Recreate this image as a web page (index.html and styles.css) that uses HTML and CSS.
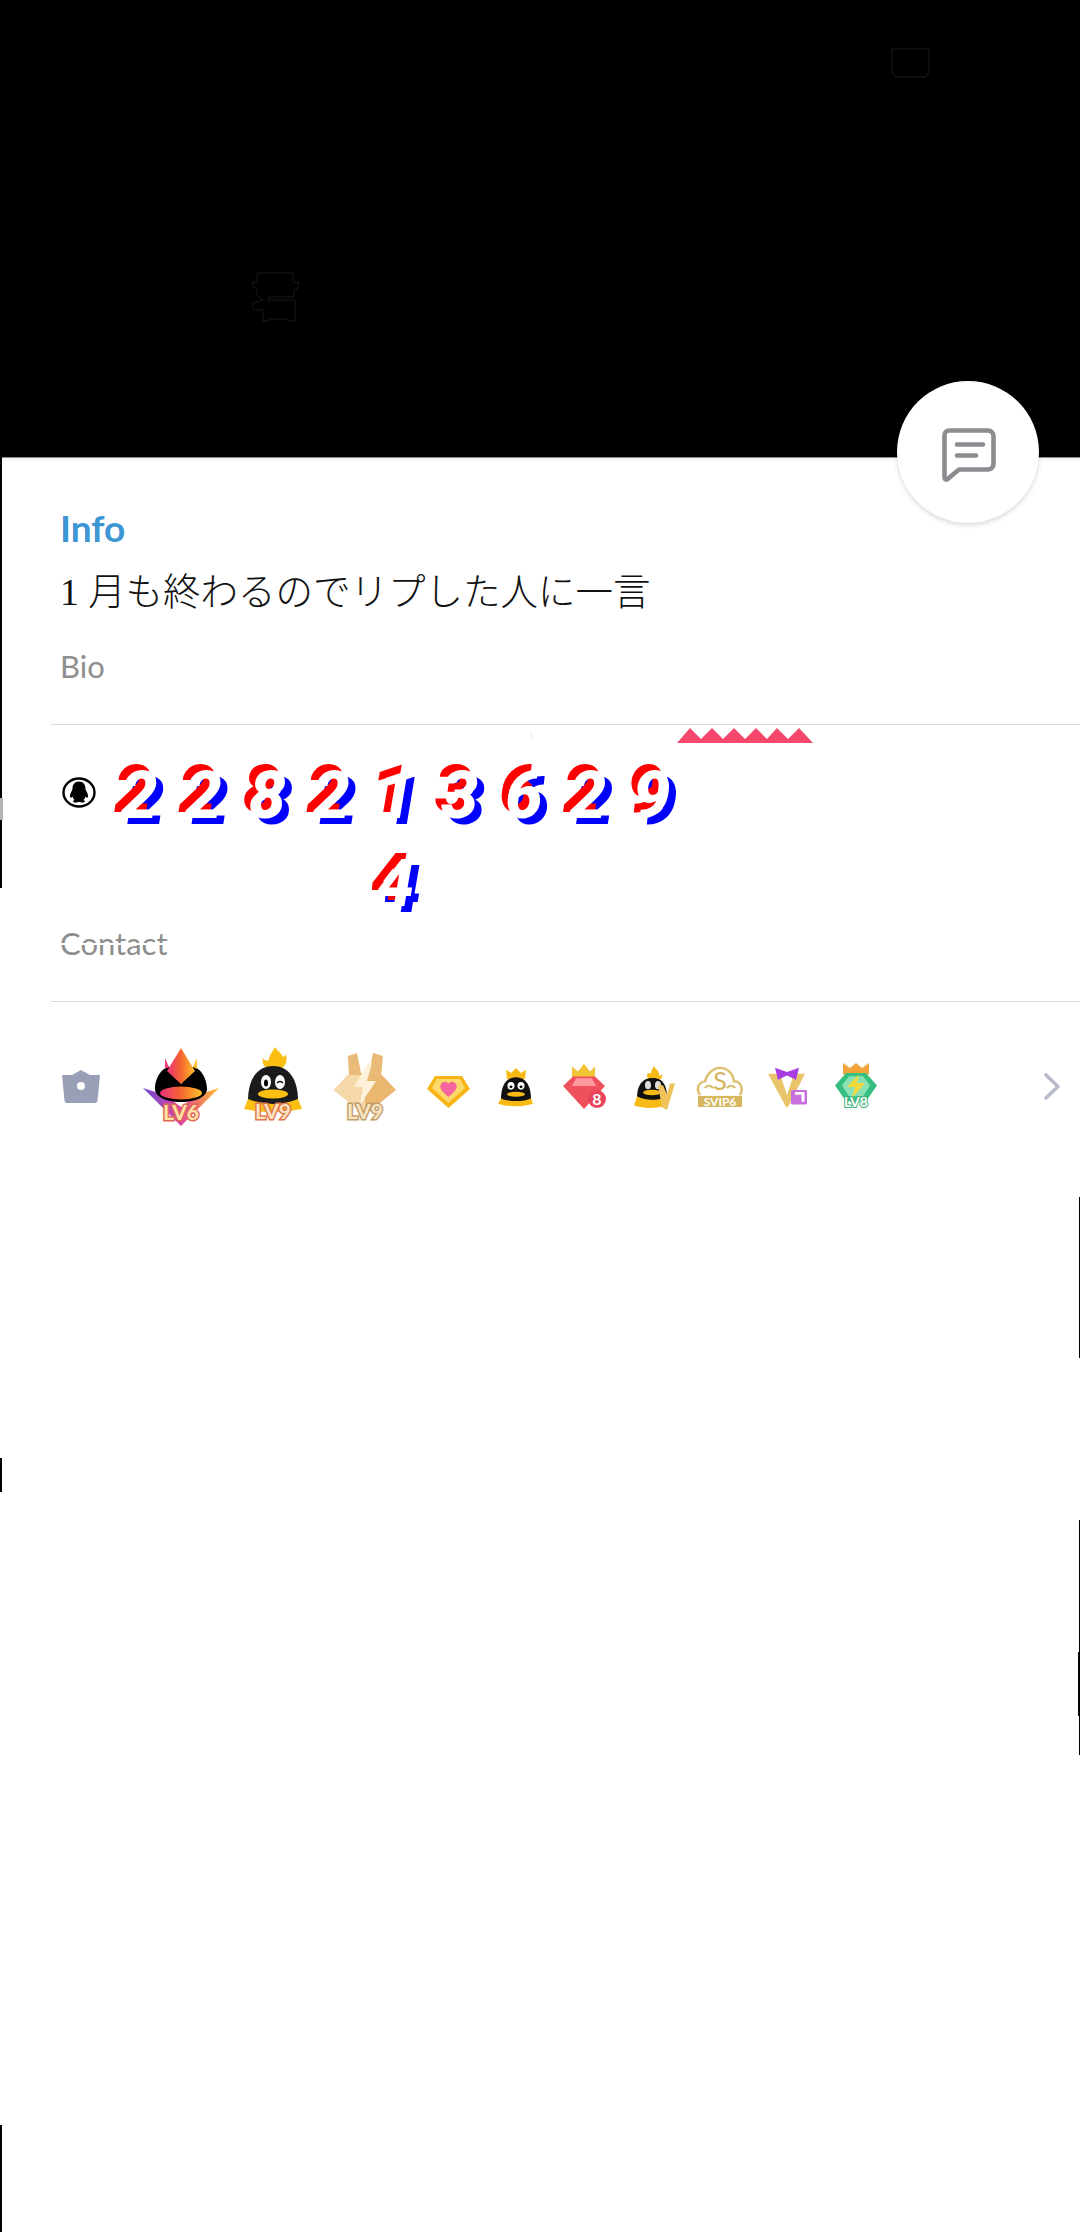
FILE: index.html
```html
<!DOCTYPE html>
<html lang="ja">
<head>
<meta charset="utf-8">
<title>Info</title>
<link rel="stylesheet" href="styles.css">
</head>
<body>
<div class="page">
  <header class="hero">
    <svg class="hero-art" width="1080" height="457" viewBox="0 0 1080 457" fill="none" stroke="#191b1d" stroke-width="1">
      <path d="M892 49H929V72L926 77H895L892 72Z"/>
      <path d="M257 273H293V282L299 283L297 289L294 291V297H269L268 300H295V321H288L287 319H270L268 321H263V310H255L252 307L253 303L263 300L257 295V290L252 285L253 282L257 282Z"/>
    </svg>
    <button class="fab" aria-label="Message">
      <svg width="54" height="54" viewBox="0 0 54 54" fill="none" stroke="#8a8c90" stroke-width="4.6" stroke-linecap="round" stroke-linejoin="round">
        <path d="M7 2.5H46A5.5 5.5 0 0 1 51.500 8V36A5.500 5.500 0 0 1 46 41.500H17L5 51.500Q2.500 52 2.500 49V7A4.500 4.500 0 0 1 7 2.500Z"/>
        <path d="M15 16.500H41M15 27.500H34"/>
      </svg>
    </button>
  </header>

  <main class="panel">
    <section class="block intro">
      <h2 class="title">Info</h2>
      <p class="bio">1 月も終わるのでリプした人に一言</p>
      <div class="label">Bio</div>
    </section>

    <section class="block contact">
      <svg class="ribbon" width="136" height="15" viewBox="0 0 136 15"><path fill="#f4476b" d="M0 15L13 0L24 11L35 0L46 11L57 0L68 11L79 0L90 11L100 0L111 11L122 0L136 15Z"/></svg>
      <span class="speck"></span>
      <div class="qq-row">
        <svg class="qq" width="34" height="31" viewBox="0 0 34 31">
          <ellipse cx="17" cy="15.500" rx="15.500" ry="14" fill="#fff" stroke="#000" stroke-width="2.400"/>
          <path fill="#000" d="M17 4.500C12.500 4.500 10.500 8 10.500 11.500C10.500 13 9.500 14 8.500 16.500C7.700 18.500 7.800 20.500 8.700 20.800C9.300 21 10 20 10.500 19.500C11 21 11.500 22 12.500 23C10.800 23.800 10.500 25.500 13.500 25.500C15 25.500 16 25 17 25C18 25 19 25.500 20.500 25.500C23.500 25.500 23.200 23.800 21.500 23C22.500 22 23 21 23.500 19.500C24 20 24.700 21 25.300 20.800C26.200 20.500 26.300 18.500 25.500 16.500C24.500 14 23.500 13 23.500 11.500C23.500 8 21.500 4.500 17 4.500Z"/>
        </svg>
        <div class="number">2282136294</div>
      </div>
      <div class="label glitch">Contact</div>
    </section>

    <section class="block badges">
      <svg width="81" height="80" viewBox="0 0 81 80"><path fill="#9a9fb8" d="M0 28L10 28L19 23L28 28L38 28L35.500 54Q35 56 33 56H5Q3 56 2.500 54Z"/><circle cx="19" cy="39" r="4" fill="#fff"/></svg>

      <svg width="101" height="80" viewBox="0 0 101 80">
        <defs>
          <linearGradient id="g1" x1="0" y1="0" x2="1" y2="0"><stop offset="0" stop-color="#e8307e"/><stop offset=".5" stop-color="#f5662f"/><stop offset="1" stop-color="#fdc12a"/></linearGradient>
          <linearGradient id="g2" x1="0" y1="0" x2="1" y2="0"><stop offset="0" stop-color="#6b4ad8"/><stop offset=".5" stop-color="#e0459a"/><stop offset="1" stop-color="#fbbf2c"/></linearGradient>
        </defs>
        <path fill="url(#g2)" d="M0 41L22 48L38 60L54 48L76 41L38 79Z"/>
        <path fill="#000" d="M12 42C12 30 20 20 26 20L38 37L50 20C56 20 64 30 64 42C64 48 56 55 38 55C20 55 12 48 12 42Z"/>
        <path fill="url(#g1)" d="M38 1L52 24L38 37L24 24Z"/>
        <path fill="#ee3f72" d="M22 11L26 20L22 22Z"/><path fill="#fcc02a" d="M54 11L50 20L54 22Z"/>
        <ellipse cx="38" cy="46" rx="21" ry="6.500" fill="url(#g1)"/>
        <text class="lv" x="38" y="73" fill="#fde3a6" stroke="#e2675a">LV6</text>
      </svg>

      <svg width="90" height="80" viewBox="0 0 90 80">
        <path fill="#fbbf12" d="M31 0C34 5 38 6 39 10C41 9 42 8 42 7C43 13 44 20 31 25C22 22 17 18 19 11C21 14 23 14 25 13C25 8 28 6 31 0Z"/>
        <path fill="#1b1b1d" d="M4 54C4 31 14 19 29 19C44 19 54 31 54 54C54 60 4 60 4 54Z"/>
        <path fill="#fbbf12" d="M4 52Q29 62 54 52L58 62Q29 68 0 62Z"/>
        <ellipse cx="22" cy="35" rx="5" ry="7" fill="#fff"/><ellipse cx="36" cy="35" rx="5" ry="7" fill="#fff"/>
        <ellipse cx="22" cy="36" rx="2" ry="3.500" fill="#000"/><path d="M33 36Q36 33 39 36" stroke="#000" stroke-width="1.500" fill="none"/>
        <ellipse cx="29" cy="47" rx="15" ry="4.500" fill="#fbbf12"/>
        <text class="lv" x="29" y="72" fill="#fde3c0" stroke="#e0784f">LV9</text>
      </svg>

      <svg width="93" height="80" viewBox="0 0 93 80">
        <path fill="#e8bb78" d="M14 9L23 6L27 26H35L39 6L49 9L47 30H15Z"/>
        <path fill="#e9b76f" d="M14 28H48L62 43L31 68L0 43Z"/>
        <path fill="#f6d9a8" d="M14 28H31V68L0 43Z"/>
        <path fill="#fff1da" d="M34 16L20 40H29L26 58L42 34H33L38 16Z"/>
        <text class="lv" x="31" y="72" fill="#f7e4c4" stroke="#c49d68">LV9</text>
      </svg>

      <svg width="71" height="80" viewBox="0 0 71 80">
        <path fill="#f8b415" d="M8 29H35L43 42L21.500 61L0 42Z"/>
        <path fill="#fbd96b" d="M10 32H33L38 41L21.500 56L5 41Z"/>
        <path fill="#f765a0" d="M21.500 50C14 44 12 40 14 37C16 34 20 34 21.500 37C23 34 27 34 29 37C31 40 29 44 21.500 50Z"/>
      </svg>

      <svg width="65" height="80" viewBox="0 0 65 80">
        <g transform="translate(0 -2) scale(1 .85)">
        <path fill="#f7b916" d="M9 40L8 29L13 33L18 27L23 33L28 29L27 40Z"/>
        <path fill="#111" d="M3 64C3 48 8 38 18 38C28 38 33 48 33 64C33 68 3 68 3 64Z"/>
        <path fill="#f7b916" d="M3 63C10 67 26 67 33 63L35 69C25 73 10 73 0 69Z"/>
        <ellipse cx="13" cy="48" rx="3.500" ry="4.500" fill="#fff"/><ellipse cx="23" cy="48" rx="3.500" ry="4.500" fill="#fff"/>
        <circle cx="13" cy="49" r="1.500"/><circle cx="23" cy="49" r="1.500"/>
        <ellipse cx="18" cy="58" rx="9" ry="3" fill="#f7b916"/>
        </g>
      </svg>

      <svg width="71" height="80" viewBox="0 0 71 80">
        <g transform="translate(0 -1) scale(1 .85)">
        <path fill="#f2c437" d="M9 37L9 24L15 30L21 21L27 30L32 24L32 37Z"/>
        <path fill="#f0505c" d="M10 36H32L42 47L21 74L0 47Z"/>
        <path fill="#ff9aa0" d="M13 38H29L33 47H9Z"/>
        </g>
        <circle cx="34" cy="52" r="9" fill="#e9445c"/>
        <text class="num8" x="34" y="58" fill="#fff">8</text>
      </svg>

      <svg width="61" height="80" viewBox="0 0 61 80">
        <g transform="translate(0 -5.700) scale(1 .915)">
        <path fill="#f7b916" d="M20 27C22 31 26 33 25 38C27 37 28 36 28 36C29 40 27 43 19 43C13 42 12 38 14 34C15 36 17 35 17 34C17 31 19 30 20 27Z"/>
        <path fill="#111" d="M3 62C3 48 8 40 19 40C30 40 33 50 33 62C33 66 3 66 3 62Z"/>
        <path fill="#f7b916" d="M3 60C10 65 28 65 33 60L33 70C22 74 10 74 0 70Z"/>
        <ellipse cx="14" cy="48" rx="3" ry="4.500" fill="#ddd"/><ellipse cx="24" cy="48" rx="3" ry="4.500" fill="#ddd"/>
        <ellipse cx="18" cy="56" rx="9" ry="3" fill="#f7b916"/>
        <path fill="#eec35a" d="M24 48L29 48L33 58L36 46L41 46L33 75L28 72Z"/>
        </g>
      </svg>

      <svg width="73" height="80" viewBox="0 0 73 80">
        <g transform="translate(0 -1.250) scale(1 .85)">
        <path fill="none" stroke="#dcc06f" stroke-width="2.500" d="M5 58C0 50 5 42 10 42C12 33 18 26 25 26C32 26 38 32 39 42C45 41 49 50 45 58"/>
        <path fill="none" stroke="#dcc06f" stroke-width="2.500" d="M10 50C12 46 16 46 18 50M32 50C34 46 38 46 40 50"/>
        <rect x="3" y="59" width="44" height="13" fill="#d6b760"/>
        </g>
        <text class="s" x="25" y="43" fill="#d3b35c">S</text>
        <text class="svip" x="25" y="59" fill="#fff">SVIP6</text>
      </svg>

      <svg width="67" height="80" viewBox="0 0 67 80">
        <g transform="translate(0 -1.250) scale(1 .85)">
        <path fill="#e8c46a" d="M0 33L12 33L19 58L26 33H37L20 72H18Z"/>
        <path fill="#a83ee0" d="M7 26L19 31L31 26L28 40L19 35L10 40Z"/>
        <rect x="23" y="52" width="16" height="17" rx="1.500" fill="#c86fe0"/>
        <path fill="none" stroke="#fff" stroke-width="3" d="M27 56H35V66"/>
        </g>
      </svg>

      <svg width="42" height="80" viewBox="0 0 42 80">
        <g transform="translate(0 -.700) scale(1 .833)">
        <path fill="#f2a53a" d="M8 34L8 20L15 26L21 20L27 26L34 20L34 34Z"/>
        <path fill="#35c07f" d="M11 32H31L42 47L31 66H11L0 47Z"/>
        <path fill="#8be0b4" d="M14 36H28L35 47L28 60H14L7 47Z"/>
        <path fill="#f5d93a" d="M24 34L12 49H20L17 62L30 44H22Z"/>
        </g>
        <text class="lv8" x="21" y="60" fill="#fff" stroke="#3fb27c">LV8</text>
      </svg>

      <svg class="chev" width="16" height="27" viewBox="0 0 16 27"><path d="M2 2L14 13.500L2 25" fill="none" stroke="#b8bbc8" stroke-width="3.600" stroke-linecap="round" stroke-linejoin="round"/></svg>
    </section>
  </main>

  <i class="edge l a"></i><i class="edge l b"></i><i class="edge l c"></i><i class="edge l d"></i>
  <i class="edge r f"></i><i class="edge r g"></i><i class="edge r h"></i>
</div>
</body>
</html>
```

FILE: styles.css
```css
* { box-sizing: border-box; }
html, body { margin: 0; padding: 0; background: #fff; }
.page { position: relative; width: 1080px; height: 2232px; overflow: hidden; font-family: Lato, "Noto Sans", sans-serif; }

.hero { position: relative; height: 457px; background: #000; }
.hero-art { display: block; }
.fab {
  position: absolute; right: 41px; top: 381px; width: 142px; height: 142px; padding: 0;
  display: flex; align-items: center; justify-content: center;
  background: #fff; border: 0; border-radius: 50%;
  box-shadow: 0 2px 5px rgba(0, 0, 0, .16);
  z-index: 2;
}
.fab svg { display: block; margin: 5px 0 0 2px; }

.panel { padding-left: 51px; border-top: 1px solid #8a8a8a; box-shadow: inset 0 4px 4px -3px rgba(0, 0, 0, .08); }
.block { position: relative; border-bottom: 1px solid #dcdcdc; }

.intro { padding: 50px 0 43px 9px; }
.title { margin: 0; font-size: 37px; line-height: 40px; font-weight: 700; color: #3d96d4; }
.bio { margin: 20px 0 33px; font: 300 37.500px/50px "Liberation Serif", "Noto Sans CJK JP", serif; color: #111; }
.label { position: relative; font-size: 31px; line-height: 30px; color: #8e8e8e; }

.contact { padding: 27px 0 43px 9px; }
.qq-row { display: flex; align-items: flex-start; }
.qq { flex: none; margin: 25px 0 0 2px; }
.number {
  width: 610px; margin-left: 8px; text-align: center; word-break: break-all;
  font: italic 900 66px/88px Roboto, "Liberation Sans", sans-serif;
  letter-spacing: 27px; color: #fff;
  text-shadow: -6px -6px 0 #f00, 7px 6px 0 #00f;
}
.glitch { display: inline-block; margin-top: 0; }
.glitch::after { content: ""; position: absolute; left: 0; right: 0; top: 15px; height: 2px; background: #fff; }
.ribbon { position: absolute; left: 626px; top: 3px; }
.speck { position: absolute; left: 480px; top: 7px; width: 1px; height: 6px; background: #e6e6e6; }

.badges { display: flex; align-items: flex-start; padding: 45px 0 0 11px; border-bottom: 0; }
.badges svg { display: block; flex: none; }
.chev { margin: 26px 20px 0 auto; }
.lv { font: 700 21px Lato, sans-serif; text-anchor: middle; stroke-width: 3px; paint-order: stroke; }
.lv8 { font: 700 14px Lato, sans-serif; text-anchor: middle; stroke-width: 2px; paint-order: stroke; }
.num8 { font: 700 16px Lato, sans-serif; text-anchor: middle; }
.s { font: 400 25px Lato, sans-serif; text-anchor: middle; }
.svip { font: 700 12px Lato, sans-serif; text-anchor: middle; }

.edge { position: absolute; display: block; background: #000; z-index: 3; }
.edge.l { left: 0; width: 2px; }
.edge.r { right: 0; width: 1px; }
.a { top: 457px; height: 431px; }
.b { top: 798px; height: 22px; width: 3px !important; background: #b5b5b5; }
.c { top: 1458px; height: 34px; }
.d { top: 2125px; height: 107px; }
.f { top: 1197px; height: 161px; }
.g { top: 1520px; height: 235px; }
.h { top: 1652px; height: 64px; width: 2px !important; }
```
